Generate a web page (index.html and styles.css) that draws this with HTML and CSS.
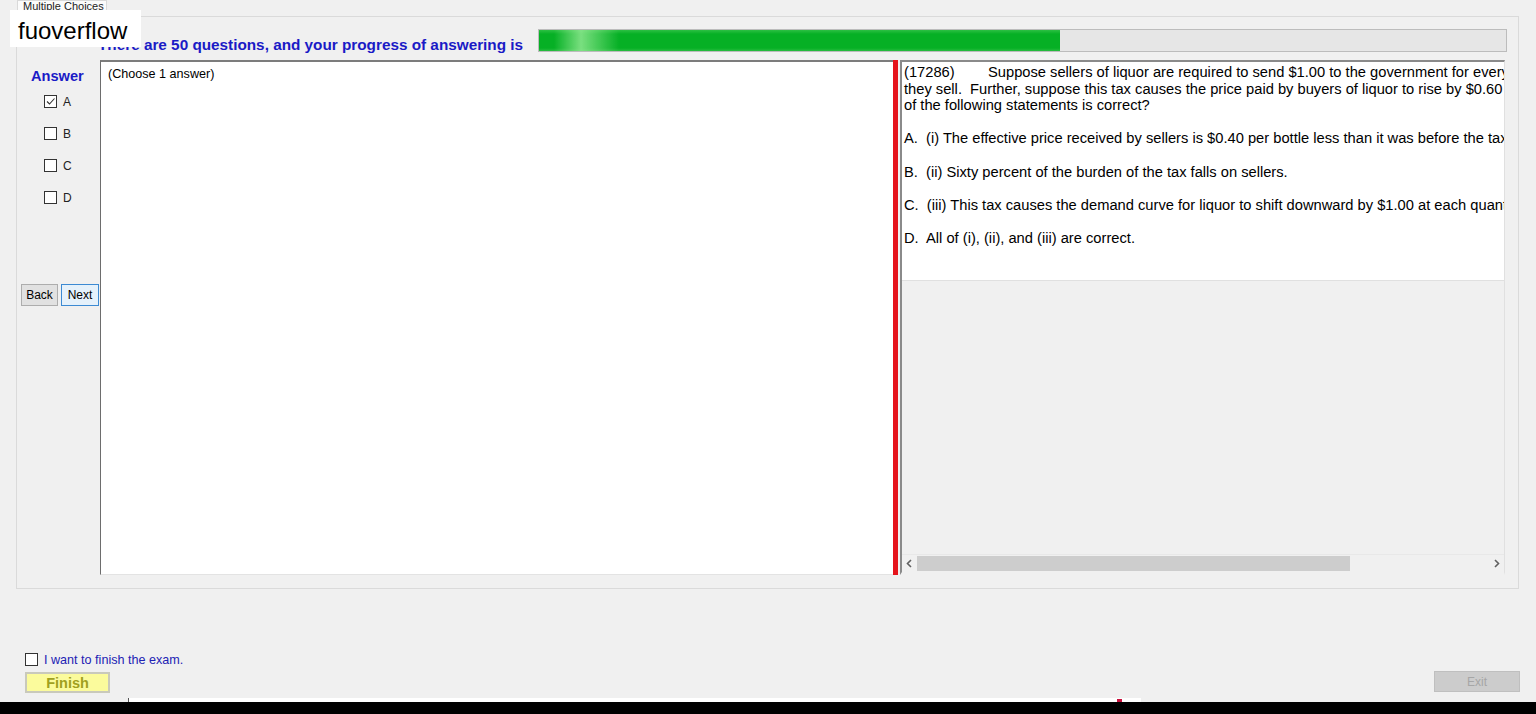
FILE: index.html
```html
<!doctype html>
<html lang="en">

<head>
	<meta charset="UTF-8" />
	<meta name="viewport" content="width=device-width, initial-scale=1.0" />
	<title>Multiple Choices</title>
	<link rel="stylesheet" href="styles.css">
</head>

<body>
	<div class="tabs">
		<span class="tab">Multiple Choices</span>
	</div>

	<div class="panel">
		<div class="header">
			<h1 class="progress-title">There are 50 questions, and your progress of answering is</h1>
			<div class="progress">
				<div class="progress-fill" style="width: 53.9%"></div>
			</div>
		</div>

		<div class="main">
			<div class="answers">
				<div class="answers-title">Answer</div>
				<label class="choice"><span class="box checked"><svg viewBox="0 0 11 11" width="11" height="11"><path d="M2 5.5 L4.5 8 L9.5 2.5" fill="none" stroke="#333" stroke-width="1.1" /></svg></span>A</label>
				<label class="choice"><span class="box"></span>B</label>
				<label class="choice"><span class="box"></span>C</label>
				<label class="choice"><span class="box"></span>D</label>
				<div class="nav">
					<button type="button" class="btn">Back</button>
					<button type="button" class="btn btn-focus">Next</button>
				</div>
			</div>

			<div class="question-box">(Choose 1 answer)</div>

			<div class="splitter"></div>

			<div class="viewer">
				<div class="doc">
					<div class="line"><span class="qid">(17286)</span>Suppose sellers of liquor are required to send $1.00 to the government for every bottle of liquor</div>
					<div class="line">they sell.&nbsp; Further, suppose this tax causes the price paid by buyers of liquor to rise by $0.60 per bottle. Which</div>
					<div class="line">of the following statements is correct?</div>
					<div class="line option">A.&nbsp; (i) The effective price received by sellers is $0.40 per bottle less than it was before the tax.</div>
					<div class="line option">B.&nbsp; (ii) Sixty percent of the burden of the tax falls on sellers.</div>
					<div class="line option">C.&nbsp; (iii) This tax causes the demand curve for liquor to shift downward by $1.00 at each quantity of liquor.</div>
					<div class="line option">D.&nbsp; All of (i), (ii), and (iii) are correct.</div>
				</div>
				<div class="viewer-fill"></div>
				<div class="hscroll">
					<svg class="arrow" viewBox="0 0 15 15" width="15" height="15"><path d="M9 4 L5.5 7.5 L9 11" fill="none" stroke="#606060" stroke-width="1.6" /></svg>
					<div class="track"><div class="thumb"></div></div>
					<svg class="arrow" viewBox="0 0 15 15" width="15" height="15"><path d="M6 4 L9.5 7.5 L6 11" fill="none" stroke="#606060" stroke-width="1.6" /></svg>
				</div>
			</div>
		</div>
	</div>

	<div class="finish-area">
		<label class="finish-check"><span class="box"></span>I want to finish the exam.</label>
		<div class="finish-row">
			<button type="button" class="finish-btn">Finish</button>
			<button type="button" class="exit-btn" disabled>Exit</button>
		</div>
	</div>

	<div class="strip">
		<div class="strip-window"><span class="strip-mark"></span></div>
	</div>
	<div class="taskbar"></div>

	<div class="watermark">fuoverflow</div>
</body>

</html>
```

FILE: styles.css
```css
body {
	margin: 0;
	background: #f0f0f0;
	font-family: "Liberation Sans", Arial, sans-serif;
	font-size: 12px;
	color: #000;
	height: 714px;
	overflow: hidden;
	position: relative;
}

.tabs {
	height: 16px;
	padding-left: 17px;
	display: flex;
	align-items: flex-end;
}

.tab {
	display: block;
	height: 16px;
	width: 90px;
	box-sizing: border-box;
	border: 1px solid #d9d9d9;
	border-bottom: none;
	background: #fbfbfb;
	font-size: 11px;
	line-height: 11px;
	padding-left: 5px;
	color: #222;
	white-space: nowrap;
	overflow: hidden;
}

.panel {
	margin-left: 16px;
	width: 1503px;
	height: 573px;
	box-sizing: border-box;
	border: 1px solid #dadada;
	background: #f0f0f0;
}

.header {
	height: 43px;
	display: flex;
	justify-content: space-between;
	align-items: flex-start;
	padding-top: 12px;
	box-sizing: border-box;
}

.progress-title {
	margin: 7px 0 0 81px;
	font-size: 15.3px;
	font-weight: bold;
	color: #1a1ac6;
	white-space: nowrap;
}

.progress {
	width: 969px;
	height: 23px;
	margin-right: 11px;
	box-sizing: border-box;
	border: 1px solid #bcbcbc;
	background: #e6e6e6;
}

.progress-fill {
	height: 100%;
	background:
		linear-gradient(90deg, rgba(255, 255, 255, 0) 15px, rgba(150, 235, 150, 0.8) 42px, rgba(255, 255, 255, 0) 80px),
		linear-gradient(180deg, #2cc043 0, #06b025 4px, #06b025 18px, #28bc40 100%);
}

.main {
	display: grid;
	grid-template-columns: 83px 793px 5px 607px;
	height: 515px;
}

.answers {
	display: flex;
	flex-direction: column;
	padding-top: 8px;
}

.answers-title {
	margin-left: 14px;
	font-size: 14.6px;
	font-weight: bold;
	color: #1a1ac6;
	line-height: 17px;
	margin-bottom: 10px;
}

.choice {
	display: flex;
	align-items: center;
	height: 13px;
	margin-left: 27px;
	margin-bottom: 19px;
	gap: 6px;
	color: #222;
}

.box {
	display: inline-flex;
	align-items: center;
	justify-content: center;
	width: 13px;
	height: 13px;
	box-sizing: border-box;
	border: 1px solid #333;
	background: #fff;
}

.nav {
	display: flex;
	gap: 3px;
	margin-top: 61px;
	margin-left: 4px;
}

.btn {
	height: 22px;
	width: 37px;
	padding: 0;
	font-family: inherit;
	font-size: 12px;
	background: #e1e1e1;
	border: 1px solid #adadad;
	color: #000;
}

.btn-focus {
	width: 38px;
	background: #e5f1fb;
	border-color: #3c8ad3;
}

.question-box {
	background: #fff;
	border-top: 2px solid #7c7c7c;
	border-left: 1px solid #6d6d6d;
	border-bottom: 1px solid #e3e3e3;
	padding: 5px 7px;
	font-size: 12.6px;
	line-height: 15px;
}

.splitter {
	background: #e5141c;
}

.viewer {
	margin-left: 2px;
	display: flex;
	flex-direction: column;
	border-top: 2px solid #8a8a8a;
	border-left: 2px solid #8a8a8a;
	border-right: 1px solid #e0e0e0;
	border-bottom: 3px solid #f0f0f0;
	overflow: hidden;
}

.doc {
	background: #fff;
	height: 216px;
	padding: 2px 0 0 2px;
	border-bottom: 1px solid #e0e0e0;
	font-size: 14.7px;
	line-height: 16.6px;
}

.line {
	white-space: nowrap;
}

.option {
	margin-top: 16.6px;
}

.qid {
	display: inline-block;
	width: 84px;
}

.viewer-fill {
	flex: 1;
}

.hscroll {
	height: 17px;
	display: flex;
	align-items: center;
	background: #f0f0f0;
	border-top: 1px solid #e8e8e8;
}

.arrow {
	flex: none;
}

.track {
	flex: 1;
	height: 15px;
}

.thumb {
	width: 433px;
	height: 100%;
	background: #cdcdcd;
}

.finish-area {
	height: 107px;
	box-sizing: border-box;
	padding: 64px 16px 0 25px;
}

.finish-check {
	display: flex;
	align-items: center;
	gap: 6px;
	font-size: 12.6px;
	color: #2222b4;
	height: 13px;
}

.finish-row {
	display: flex;
	justify-content: space-between;
	align-items: flex-start;
	margin-top: 5px;
}

.finish-btn {
	margin-top: 1px;
	width: 85px;
	height: 21px;
	padding: 0;
	background: #fbfb9c;
	border: 2px solid #c9c9bb;
	font-family: inherit;
	font-size: 14.5px;
	font-weight: bold;
	color: #a0a020;
}

.exit-btn {
	width: 86px;
	height: 21px;
	padding: 0;
	background: #cccccc;
	border: 1px solid #bfbfbf;
	font-family: inherit;
	font-size: 12px;
	color: #a6a6a6;
}

.strip {
	height: 6px;
	display: flex;
	align-items: flex-end;
}

.strip-window {
	margin-left: 128px;
	width: 1012px;
	height: 4px;
	background: #fff;
	border-left: 1px solid #555;
	position: relative;
}

.strip-mark {
	position: absolute;
	left: 988px;
	bottom: 0;
	width: 5px;
	height: 3px;
	background: #c8103c;
}

.taskbar {
	height: 12px;
	background: #000;
}

.watermark {
	position: absolute;
	left: 10px;
	top: 10px;
	width: 131px;
	height: 37px;
	box-sizing: border-box;
	background: #fff;
	padding-left: 8px;
	font-size: 24px;
	line-height: 41px;
	color: #000;
}
```
